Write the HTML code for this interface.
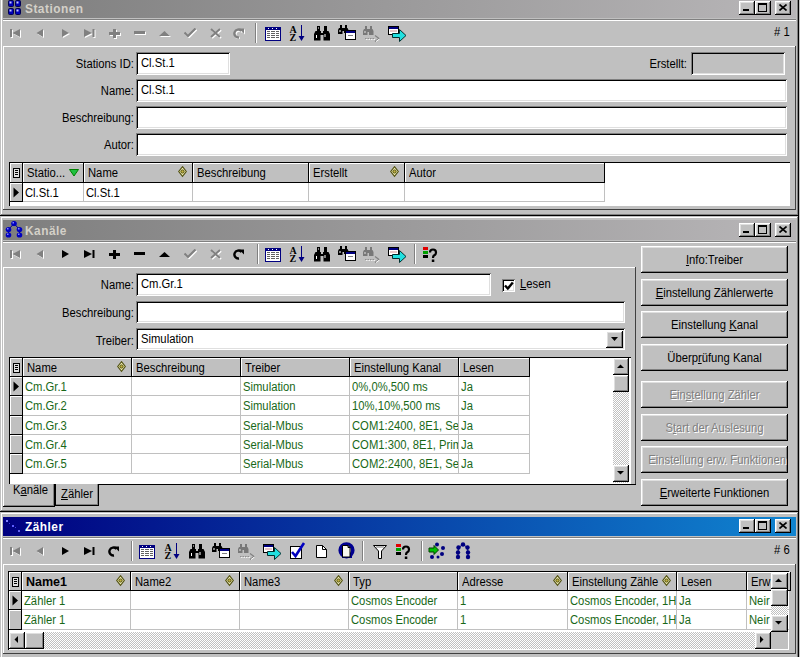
<!DOCTYPE html>
<html><head><meta charset="utf-8"><style>
html,body{margin:0;padding:0;width:800px;height:657px;overflow:hidden;background:#c0c0c0;}
body{position:relative;font-family:"Liberation Sans",sans-serif;color:#000;}
div,span,svg{position:absolute;box-sizing:border-box;}
span{white-space:nowrap;line-height:1;font-size:12.5px;transform:scaleX(0.9);transform-origin:left top;}
</style></head><body>
<div style="left:0;top:-4px;width:799px;height:220px;background:#c0c0c0;box-shadow:inset -1px -1px #000,inset 1px 1px #c0c0c0,inset -2px -2px #808080,inset 2px 2px #fff;"></div>
<div style="left:3px;top:-1px;width:793px;height:19px;background:linear-gradient(to right,#7e7e7e,#b8b6b8);"></div>
<svg style="left:5px;top:0px" width="17" height="17" viewBox="0 0 17 17"><rect x="3.5" y="0.5" width="5" height="6" rx="1" fill="#0000b8" stroke="#000050"/><rect x="4.5" y="1.5" width="2" height="2" fill="#c8c8ff"/><rect x="10.5" y="0.5" width="5" height="6" rx="1" fill="#0000b8" stroke="#000050"/><rect x="11.5" y="1.5" width="2" height="2" fill="#c8c8ff"/><rect x="3.5" y="8.5" width="5" height="6" rx="1" fill="#0000b8" stroke="#000050"/><rect x="4.5" y="9.5" width="2" height="2" fill="#c8c8ff"/><rect x="10.5" y="8.5" width="5" height="6" rx="1" fill="#0000b8" stroke="#000050"/><rect x="11.5" y="9.5" width="2" height="2" fill="#c8c8ff"/></svg>
<span style="left:25px;top:1.5px;font-weight:bold;font-size:13.5px;letter-spacing:0.55px;color:#d4d0c8;transform:scaleX(0.88);">Stationen</span>
<div style="left:739px;top:1px;width:16px;height:14px;background:#c0c0c0;box-shadow:inset -1px -1px #000,inset 1px 1px #fff,inset -2px -2px #808080,inset 2px 2px #dfdfdf;"></div>
<div style="left:743px;top:9px;width:6px;height:2px;background:#000;"></div>
<div style="left:755px;top:1px;width:16px;height:14px;background:#c0c0c0;box-shadow:inset -1px -1px #000,inset 1px 1px #fff,inset -2px -2px #808080,inset 2px 2px #dfdfdf;"></div>
<div style="left:758px;top:3px;width:9px;height:9px;box-shadow:inset 0 2px #000,inset 1px 0 #000,inset -1px 0 #000,inset 0 -1px #000;"></div>
<div style="left:775px;top:1px;width:16px;height:14px;background:#c0c0c0;box-shadow:inset -1px -1px #000,inset 1px 1px #fff,inset -2px -2px #808080,inset 2px 2px #dfdfdf;"></div>
<svg style="left:779px;top:4px" width="8" height="7"><path d="M0.5 0.5L7.5 6.5M7.5 0.5L0.5 6.5" stroke="#000" stroke-width="1.6"/></svg>
<div style="left:3px;top:19px;width:793px;height:1px;background:#808080;"></div>
<div style="left:3px;top:20px;width:793px;height:1px;background:#fff;"></div>
<svg style="left:10px;top:29px" width="12" height="10" viewBox="0 0 12 10"><g transform="translate(1,1)"><rect x="0" y="0" width="2" height="8" fill="#fff"/><path d="M10 0V8L2.5 4Z" fill="#fff"/></g><rect x="0" y="0" width="2" height="8" fill="#808080"/><path d="M10 0V8L2.5 4Z" fill="#808080"/></svg>
<svg style="left:36px;top:29px" width="9" height="10" viewBox="0 0 9 10"><g transform="translate(1,1)"><path d="M7 0V8L0.5 4Z" fill="#fff"/></g><path d="M7 0V8L0.5 4Z" fill="#808080"/></svg>
<svg style="left:62px;top:29px" width="9" height="10" viewBox="0 0 9 10"><g transform="translate(1,1)"><path d="M0 0V8L7 4Z" fill="#fff"/></g><path d="M0 0V8L7 4Z" fill="#808080"/></svg>
<svg style="left:84px;top:29px" width="12" height="10" viewBox="0 0 12 10"><g transform="translate(1,1)"><path d="M0 0V8L8 4Z" fill="#fff"/><rect x="8.5" y="0" width="2" height="8" fill="#fff"/></g><path d="M0 0V8L8 4Z" fill="#808080"/><rect x="8.5" y="0" width="2" height="8" fill="#808080"/></svg>
<svg style="left:109px;top:29px" width="12" height="10" viewBox="0 0 12 10"><g transform="translate(1,1)"><rect x="4" y="0" width="3" height="9" fill="#fff"/><rect x="0" y="3" width="11" height="3" fill="#fff"/></g><rect x="4" y="0" width="3" height="9" fill="#808080"/><rect x="0" y="3" width="11" height="3" fill="#808080"/></svg>
<svg style="left:134px;top:31px" width="12" height="4" viewBox="0 0 12 4"><g transform="translate(1,1)"><rect x="0" y="0" width="11" height="3" fill="#fff"/></g><rect x="0" y="0" width="11" height="3" fill="#808080"/></svg>
<svg style="left:159px;top:31px" width="12" height="6" viewBox="0 0 12 6"><g transform="translate(1,1)"><path d="M0 5H11L5.5 0Z" fill="#fff"/></g><path d="M0 5H11L5.5 0Z" fill="#808080"/></svg>
<svg style="left:184px;top:28px" width="13" height="10" viewBox="0 0 13 10"><g transform="translate(1,1)"><path d="M0.5 4.5L4 8L11.5 0.5" stroke="#fff" stroke-width="2.2" fill="none"/></g><path d="M0.5 4.5L4 8L11.5 0.5" stroke="#808080" stroke-width="2.2" fill="none"/></svg>
<svg style="left:210px;top:28px" width="12" height="11" viewBox="0 0 12 11"><g transform="translate(1,1)"><path d="M1 1L10 9M10 1L1 9" stroke="#fff" stroke-width="2" fill="none"/></g><path d="M1 1L10 9M10 1L1 9" stroke="#808080" stroke-width="2" fill="none"/></svg>
<svg style="left:233px;top:28px" width="12" height="11" viewBox="0 0 12 11"><g transform="translate(1,1)"><path d="M8.5 3A4 4 0 1 0 6 9.5" stroke="#fff" stroke-width="2.4" fill="none"/><path d="M6 0.5L11 0.5L11 5.5Z" fill="#fff"/></g><path d="M8.5 3A4 4 0 1 0 6 9.5" stroke="#808080" stroke-width="2.4" fill="none"/><path d="M6 0.5L11 0.5L11 5.5Z" fill="#808080"/></svg>
<div style="left:255px;top:23px;width:1px;height:20px;background:#808080;box-shadow:1px 0 #fff"></div>
<svg style="left:265px;top:27px" width="16" height="14" viewBox="0 0 16 14"><rect x="0.5" y="0.5" width="15" height="13" fill="#fff" stroke="#000080"/><rect x="0" y="0" width="16" height="3" fill="#000080"/><rect x="3" y="1" width="1" height="1" fill="#fff"/><rect x="7" y="1" width="1" height="1" fill="#fff"/><rect x="11" y="1" width="1" height="1" fill="#fff"/><rect x="2" y="4" width="3" height="1" fill="#606060"/><rect x="6" y="4" width="4" height="1" fill="#606060"/><rect x="11" y="4" width="3" height="1" fill="#606060"/><rect x="2" y="6" width="3" height="1" fill="#606060"/><rect x="6" y="6" width="4" height="1" fill="#606060"/><rect x="11" y="6" width="3" height="1" fill="#606060"/><rect x="2" y="8" width="3" height="1" fill="#606060"/><rect x="6" y="8" width="4" height="1" fill="#606060"/><rect x="11" y="8" width="3" height="1" fill="#606060"/><rect x="2" y="10" width="3" height="1" fill="#606060"/><rect x="6" y="10" width="4" height="1" fill="#606060"/><rect x="11" y="10" width="3" height="1" fill="#606060"/></svg>
<svg style="left:289px;top:25px" width="17" height="17" viewBox="0 0 17 17"><text x="0.5" y="8" font-family="Liberation Serif" font-weight="bold" font-size="10" fill="#000">A</text><text x="0.5" y="16" font-family="Liberation Serif" font-weight="bold" font-size="10" fill="#000">Z</text><rect x="12" y="0" width="1" height="13" fill="#000080"/><path d="M9.5 11H15.5L12.5 16Z" fill="#000080"/></svg>
<svg style="left:314px;top:26px" width="16" height="16" viewBox="0 0 16 16"><rect x="3" y="0" width="3" height="5" fill="#000"/><rect x="10" y="0" width="3" height="5" fill="#000"/><path d="M1.5 5H7V7H9V5H14.5L16 8V14.5H9.5V9H6.5V14.5H0V8Z" fill="#000"/><rect x="2" y="9" width="1" height="3" fill="#fff"/><rect x="10.5" y="8" width="1" height="3" fill="#fff"/><rect x="4" y="1" width="1" height="2" fill="#808080"/></svg>
<svg style="left:338px;top:25px" width="19" height="16" viewBox="0 0 19 16"><rect x="2" y="0" width="2" height="3" fill="#000"/><rect x="7" y="0" width="2" height="3" fill="#000"/><path d="M1 3H9.5L10.5 5V8H6V6H4.5V9H0V5Z" fill="#000"/><rect x="1.5" y="5" width="1" height="2" fill="#fff"/><rect x="7.5" y="5.5" width="10" height="9" fill="#fff" stroke="#000"/><rect x="8" y="6" width="9" height="2" fill="#000080"/><rect x="10" y="10" width="5" height="1" fill="#808080"/></svg>
<svg style="left:363px;top:26px" width="18" height="17" viewBox="0 0 18 17"><rect x="2" y="0" width="2" height="3" fill="#787878"/><rect x="7" y="0" width="2" height="3" fill="#787878"/><path d="M1 3H9.5L10.5 5V9H6V6H4.5V9H0V5Z" fill="#787878"/><rect x="1.5" y="5" width="1" height="2" fill="#e0e0e0"/><path d="M2 12.5H12" stroke="#909090" stroke-dasharray="1.5 1"/><path d="M12 9.5L16 12.5L12 15.5" stroke="#808080" stroke-width="1.2" fill="none"/><path d="M3 13.5H12" stroke="#fff" stroke-width="0.8" stroke-dasharray="1.5 1"/><path d="M13 15.5L16.5 13" stroke="#fff" stroke-width="1"/></svg>
<svg style="left:388px;top:26px" width="19" height="17" viewBox="0 0 19 17"><rect x="0.5" y="0.5" width="10" height="8" fill="#fff" stroke="#000"/><rect x="1" y="1" width="9" height="2" fill="#000080"/><rect x="2" y="4.5" width="7" height="1" fill="#d09090"/><path d="M4.5 7.5H11.5V3.5L18 9.5L11.5 15.5V11.5H4.5Z" fill="#20e0e0" stroke="#003030" stroke-width="1"/></svg>
<span style="left:774px;top:26px;"># 1</span>
<div style="left:3px;top:46px;width:793px;height:164px;box-shadow:inset -1px -1px #404040,inset 1px 1px #fff;"></div>
<span style="left:0;width:134px;text-align:right;top:58px;transform-origin:right top;">Stations ID:</span>
<div style="left:136px;top:52px;width:94px;height:23px;background:#fff;box-shadow:inset 1px 1px #808080,inset -1px -1px #fff,inset 2px 2px #000,inset -2px -2px #dfdfdf;"></div>
<span style="left:141px;top:57px;">Cl.St.1</span>
<span style="left:0;width:687px;text-align:right;top:58px;transform-origin:right top;">Erstellt:</span>
<div style="left:691px;top:52px;width:94px;height:23px;background:#c0c0c0;box-shadow:inset 1px 1px #808080,inset -1px -1px #fff,inset 2px 2px #000,inset -2px -2px #dfdfdf;"></div>
<span style="left:0;width:134px;text-align:right;top:85px;transform-origin:right top;">Name:</span>
<div style="left:136px;top:79px;width:651px;height:23px;background:#fff;box-shadow:inset 1px 1px #808080,inset -1px -1px #fff,inset 2px 2px #000,inset -2px -2px #dfdfdf;"></div>
<span style="left:141px;top:84px;">Cl.St.1</span>
<span style="left:0;width:134px;text-align:right;top:112px;transform-origin:right top;">Beschreibung:</span>
<div style="left:136px;top:106px;width:651px;height:23px;background:#fff;box-shadow:inset 1px 1px #808080,inset -1px -1px #fff,inset 2px 2px #000,inset -2px -2px #dfdfdf;"></div>
<span style="left:0;width:134px;text-align:right;top:139px;transform-origin:right top;">Autor:</span>
<div style="left:136px;top:133px;width:651px;height:23px;background:#fff;box-shadow:inset 1px 1px #808080,inset -1px -1px #fff,inset 2px 2px #000,inset -2px -2px #dfdfdf;"></div>
<div style="left:9px;top:162px;width:781px;height:44px;background:#fff;box-shadow:inset 1px 1px #000,inset -1px -1px #fff;"></div>
<div style="left:10px;top:163px;width:13px;height:20px;background:#c0c0c0;box-shadow:inset -1px -1px #000,inset 1px 1px #fff;"></div>
<svg style="left:13px;top:168px" width="7" height="10" viewBox="0 0 7 10"><rect x="0.5" y="0.5" width="6" height="9" fill="#e0e0e0" stroke="#000"/><rect x="2" y="2" width="3" height="1" fill="#000"/><rect x="2" y="4" width="3" height="1" fill="#000"/><rect x="2" y="6" width="3" height="1" fill="#000"/></svg>
<div style="left:23px;top:163px;width:61px;height:20px;background:#c0c0c0;box-shadow:inset -1px -1px #000,inset 1px 1px #fff;"></div>
<span style="left:27px;top:167px;width:60.0px;overflow:hidden;">Statio...</span>
<svg style="left:69px;top:169px" width="10" height="8" viewBox="0 0 10 8"><path d="M0.5 0.5H9.5L5 7Z" fill="#20c040" stroke="#008000"/></svg>
<div style="left:84px;top:163px;width:109px;height:20px;background:#c0c0c0;box-shadow:inset -1px -1px #000,inset 1px 1px #fff;"></div>
<span style="left:88px;top:167px;width:113.3px;overflow:hidden;">Name</span>
<svg style="left:178px;top:166px" width="9" height="12" viewBox="0 0 9 12"><path d="M4.5 0.7L8.3 5.5L4.5 10.3L0.7 5.5Z" fill="#f4f0b8" stroke="#505010" stroke-width="1.1"/><circle cx="4.5" cy="5.5" r="1.6" fill="#c0b040" stroke="#505010" stroke-width="1"/></svg>
<div style="left:193px;top:163px;width:116px;height:20px;background:#c0c0c0;box-shadow:inset -1px -1px #000,inset 1px 1px #fff;"></div>
<span style="left:197px;top:167px;width:121.1px;overflow:hidden;">Beschreibung</span>
<div style="left:309px;top:163px;width:96px;height:20px;background:#c0c0c0;box-shadow:inset -1px -1px #000,inset 1px 1px #fff;"></div>
<span style="left:313px;top:167px;width:98.9px;overflow:hidden;">Erstellt</span>
<svg style="left:390px;top:166px" width="9" height="12" viewBox="0 0 9 12"><path d="M4.5 0.7L8.3 5.5L4.5 10.3L0.7 5.5Z" fill="#f4f0b8" stroke="#505010" stroke-width="1.1"/><circle cx="4.5" cy="5.5" r="1.6" fill="#c0b040" stroke="#505010" stroke-width="1"/></svg>
<div style="left:405px;top:163px;width:200px;height:20px;background:#c0c0c0;box-shadow:inset -1px -1px #000,inset 1px 1px #fff;"></div>
<span style="left:409px;top:167px;width:214.4px;overflow:hidden;">Autor</span>
<div style="left:10px;top:183px;width:13px;height:19px;background:#c0c0c0;box-shadow:inset -1px -1px #000,inset 1px 1px #fff;"></div>
<svg style="left:13px;top:187px" width="7" height="11" viewBox="0 0 7 11"><path d="M0.5 0.5V10.5L6 5.5Z" fill="#000"/></svg>
<div style="left:23px;top:183px;width:61px;height:19px;box-shadow:inset -1px -1px #c0c0c0;"></div>
<span style="left:25px;top:187px;color:#000;width:64.4px;overflow:hidden;">Cl.St.1</span>
<div style="left:84px;top:183px;width:109px;height:19px;box-shadow:inset -1px -1px #c0c0c0;"></div>
<span style="left:86px;top:187px;color:#000;width:117.8px;overflow:hidden;">Cl.St.1</span>
<div style="left:193px;top:183px;width:116px;height:19px;box-shadow:inset -1px -1px #c0c0c0;"></div>
<div style="left:309px;top:183px;width:96px;height:19px;box-shadow:inset -1px -1px #c0c0c0;"></div>
<div style="left:405px;top:183px;width:200px;height:19px;box-shadow:inset -1px -1px #c0c0c0;"></div>
<div style="left:0;top:216px;width:799px;height:296px;background:#c0c0c0;box-shadow:inset -1px -1px #000,inset 1px 1px #c0c0c0,inset -2px -2px #808080,inset 2px 2px #fff;"></div>
<div style="left:3px;top:220px;width:793px;height:20px;background:linear-gradient(to right,#7e7e7e,#b8b6b8);"></div>
<svg style="left:0px;top:220px" width="24" height="19" viewBox="0 0 24 19"><path d="M8.5 14.5V9.5L14 3.5L19.5 9.5V14.5" stroke="#000080" stroke-width="1" fill="none"/><ellipse cx="14" cy="3.5" rx="2.8" ry="2.6" fill="#0000c0"/><rect x="12.5" y="2.0" width="1.5" height="1.5" fill="#8080ff"/><ellipse cx="8.5" cy="9.5" rx="2.8" ry="2.6" fill="#0000c0"/><rect x="7.0" y="8.0" width="1.5" height="1.5" fill="#8080ff"/><ellipse cx="19.5" cy="9.5" rx="2.8" ry="2.6" fill="#0000c0"/><rect x="18.0" y="8.0" width="1.5" height="1.5" fill="#8080ff"/><ellipse cx="8.5" cy="15" rx="2.8" ry="2.6" fill="#0000c0"/><rect x="7.0" y="13.5" width="1.5" height="1.5" fill="#8080ff"/><ellipse cx="19.5" cy="15" rx="2.8" ry="2.6" fill="#0000c0"/><rect x="18.0" y="13.5" width="1.5" height="1.5" fill="#8080ff"/></svg>
<span style="left:25px;top:223.5px;font-weight:bold;font-size:13.5px;letter-spacing:0.55px;color:#d4d0c8;transform:scaleX(0.88);">Kanäle</span>
<div style="left:739px;top:223px;width:16px;height:14px;background:#c0c0c0;box-shadow:inset -1px -1px #000,inset 1px 1px #fff,inset -2px -2px #808080,inset 2px 2px #dfdfdf;"></div>
<div style="left:743px;top:231px;width:6px;height:2px;background:#000;"></div>
<div style="left:755px;top:223px;width:16px;height:14px;background:#c0c0c0;box-shadow:inset -1px -1px #000,inset 1px 1px #fff,inset -2px -2px #808080,inset 2px 2px #dfdfdf;"></div>
<div style="left:758px;top:225px;width:9px;height:9px;box-shadow:inset 0 2px #000,inset 1px 0 #000,inset -1px 0 #000,inset 0 -1px #000;"></div>
<div style="left:775px;top:223px;width:16px;height:14px;background:#c0c0c0;box-shadow:inset -1px -1px #000,inset 1px 1px #fff,inset -2px -2px #808080,inset 2px 2px #dfdfdf;"></div>
<svg style="left:779px;top:226px" width="8" height="7"><path d="M0.5 0.5L7.5 6.5M7.5 0.5L0.5 6.5" stroke="#000" stroke-width="1.6"/></svg>
<div style="left:3px;top:241px;width:793px;height:1px;background:#808080;"></div>
<div style="left:3px;top:242px;width:793px;height:1px;background:#fff;"></div>
<svg style="left:10px;top:250px" width="12" height="10" viewBox="0 0 12 10"><g transform="translate(1,1)"><rect x="0" y="0" width="2" height="8" fill="#fff"/><path d="M10 0V8L2.5 4Z" fill="#fff"/></g><rect x="0" y="0" width="2" height="8" fill="#808080"/><path d="M10 0V8L2.5 4Z" fill="#808080"/></svg>
<svg style="left:36px;top:250px" width="9" height="10" viewBox="0 0 9 10"><g transform="translate(1,1)"><path d="M7 0V8L0.5 4Z" fill="#fff"/></g><path d="M7 0V8L0.5 4Z" fill="#808080"/></svg>
<svg style="left:62px;top:250px" width="9" height="10" viewBox="0 0 9 10"><path d="M0 0V8L7 4Z" fill="#000"/></svg>
<svg style="left:84px;top:250px" width="12" height="10" viewBox="0 0 12 10"><path d="M0 0V8L8 4Z" fill="#000"/><rect x="8.5" y="0" width="2" height="8" fill="#000"/></svg>
<svg style="left:109px;top:250px" width="12" height="10" viewBox="0 0 12 10"><rect x="4" y="0" width="3" height="9" fill="#000"/><rect x="0" y="3" width="11" height="3" fill="#000"/></svg>
<svg style="left:134px;top:252px" width="12" height="4" viewBox="0 0 12 4"><rect x="0" y="0" width="11" height="3" fill="#000"/></svg>
<svg style="left:159px;top:252px" width="12" height="6" viewBox="0 0 12 6"><path d="M0 5H11L5.5 0Z" fill="#000"/></svg>
<svg style="left:184px;top:249px" width="13" height="10" viewBox="0 0 13 10"><g transform="translate(1,1)"><path d="M0.5 4.5L4 8L11.5 0.5" stroke="#fff" stroke-width="2.2" fill="none"/></g><path d="M0.5 4.5L4 8L11.5 0.5" stroke="#808080" stroke-width="2.2" fill="none"/></svg>
<svg style="left:210px;top:249px" width="12" height="11" viewBox="0 0 12 11"><g transform="translate(1,1)"><path d="M1 1L10 9M10 1L1 9" stroke="#fff" stroke-width="2" fill="none"/></g><path d="M1 1L10 9M10 1L1 9" stroke="#808080" stroke-width="2" fill="none"/></svg>
<svg style="left:233px;top:249px" width="12" height="11" viewBox="0 0 12 11"><path d="M8.5 3A4 4 0 1 0 6 9.5" stroke="#000" stroke-width="2.4" fill="none"/><path d="M6 0.5L11 0.5L11 5.5Z" fill="#000"/></svg>
<div style="left:257px;top:244px;width:1px;height:20px;background:#808080;box-shadow:1px 0 #fff"></div>
<svg style="left:265px;top:248px" width="16" height="14" viewBox="0 0 16 14"><rect x="0.5" y="0.5" width="15" height="13" fill="#fff" stroke="#000080"/><rect x="0" y="0" width="16" height="3" fill="#000080"/><rect x="3" y="1" width="1" height="1" fill="#fff"/><rect x="7" y="1" width="1" height="1" fill="#fff"/><rect x="11" y="1" width="1" height="1" fill="#fff"/><rect x="2" y="4" width="3" height="1" fill="#606060"/><rect x="6" y="4" width="4" height="1" fill="#606060"/><rect x="11" y="4" width="3" height="1" fill="#606060"/><rect x="2" y="6" width="3" height="1" fill="#606060"/><rect x="6" y="6" width="4" height="1" fill="#606060"/><rect x="11" y="6" width="3" height="1" fill="#606060"/><rect x="2" y="8" width="3" height="1" fill="#606060"/><rect x="6" y="8" width="4" height="1" fill="#606060"/><rect x="11" y="8" width="3" height="1" fill="#606060"/><rect x="2" y="10" width="3" height="1" fill="#606060"/><rect x="6" y="10" width="4" height="1" fill="#606060"/><rect x="11" y="10" width="3" height="1" fill="#606060"/></svg>
<svg style="left:289px;top:246px" width="17" height="17" viewBox="0 0 17 17"><text x="0.5" y="8" font-family="Liberation Serif" font-weight="bold" font-size="10" fill="#000">A</text><text x="0.5" y="16" font-family="Liberation Serif" font-weight="bold" font-size="10" fill="#000">Z</text><rect x="12" y="0" width="1" height="13" fill="#000080"/><path d="M9.5 11H15.5L12.5 16Z" fill="#000080"/></svg>
<svg style="left:314px;top:247px" width="16" height="16" viewBox="0 0 16 16"><rect x="3" y="0" width="3" height="5" fill="#000"/><rect x="10" y="0" width="3" height="5" fill="#000"/><path d="M1.5 5H7V7H9V5H14.5L16 8V14.5H9.5V9H6.5V14.5H0V8Z" fill="#000"/><rect x="2" y="9" width="1" height="3" fill="#fff"/><rect x="10.5" y="8" width="1" height="3" fill="#fff"/><rect x="4" y="1" width="1" height="2" fill="#808080"/></svg>
<svg style="left:338px;top:246px" width="19" height="16" viewBox="0 0 19 16"><rect x="2" y="0" width="2" height="3" fill="#000"/><rect x="7" y="0" width="2" height="3" fill="#000"/><path d="M1 3H9.5L10.5 5V8H6V6H4.5V9H0V5Z" fill="#000"/><rect x="1.5" y="5" width="1" height="2" fill="#fff"/><rect x="7.5" y="5.5" width="10" height="9" fill="#fff" stroke="#000"/><rect x="8" y="6" width="9" height="2" fill="#000080"/><rect x="10" y="10" width="5" height="1" fill="#808080"/></svg>
<svg style="left:363px;top:247px" width="18" height="17" viewBox="0 0 18 17"><rect x="2" y="0" width="2" height="3" fill="#787878"/><rect x="7" y="0" width="2" height="3" fill="#787878"/><path d="M1 3H9.5L10.5 5V9H6V6H4.5V9H0V5Z" fill="#787878"/><rect x="1.5" y="5" width="1" height="2" fill="#e0e0e0"/><path d="M2 12.5H12" stroke="#909090" stroke-dasharray="1.5 1"/><path d="M12 9.5L16 12.5L12 15.5" stroke="#808080" stroke-width="1.2" fill="none"/><path d="M3 13.5H12" stroke="#fff" stroke-width="0.8" stroke-dasharray="1.5 1"/><path d="M13 15.5L16.5 13" stroke="#fff" stroke-width="1"/></svg>
<svg style="left:388px;top:247px" width="19" height="17" viewBox="0 0 19 17"><rect x="0.5" y="0.5" width="10" height="8" fill="#fff" stroke="#000"/><rect x="1" y="1" width="9" height="2" fill="#000080"/><rect x="2" y="4.5" width="7" height="1" fill="#d09090"/><path d="M4.5 7.5H11.5V3.5L18 9.5L11.5 15.5V11.5H4.5Z" fill="#20e0e0" stroke="#003030" stroke-width="1"/></svg>
<div style="left:414px;top:244px;width:1px;height:20px;background:#808080;box-shadow:1px 0 #fff"></div>
<svg style="left:423px;top:247px" width="16" height="16" viewBox="0 0 16 16"><rect x="0" y="0" width="5" height="3" fill="#e00000"/><rect x="0" y="4" width="5" height="3" fill="#00a000"/><rect x="0" y="8" width="5" height="3" fill="#000"/><path d="M7 5.5Q7 2.5 10 2.5Q13 2.5 13 5.5Q13 7.5 11 8.5Q10 9.2 10 11" stroke="#000" stroke-width="2.2" fill="none"/><rect x="8.8" y="12.5" width="2.5" height="2.5" fill="#000"/></svg>
<div style="left:3px;top:267px;width:633px;height:218px;box-shadow:inset -1px -1px #404040,inset 1px 1px #fff;"></div>
<span style="left:0;width:134px;text-align:right;top:279px;transform-origin:right top;">Name:</span>
<div style="left:136px;top:273px;width:355px;height:23px;background:#fff;box-shadow:inset 1px 1px #808080,inset -1px -1px #fff,inset 2px 2px #000,inset -2px -2px #dfdfdf;"></div>
<span style="left:141px;top:278px;">Cm.Gr.1</span>
<div style="left:502px;top:279px;width:13px;height:13px;background:#fff;box-shadow:inset 1px 1px #808080,inset -1px -1px #fff,inset 2px 2px #000,inset -2px -2px #dfdfdf;"></div>
<svg style="left:504px;top:281px" width="10" height="10" viewBox="0 0 10 10"><path d="M1 4.5L3.8 7.5L8.8 1.5" stroke="#000" stroke-width="2.4" fill="none"/></svg>
<span style="left:520px;top:278px;"><u>L</u>esen</span>
<span style="left:0;width:134px;text-align:right;top:307px;transform-origin:right top;">Beschreibung:</span>
<div style="left:136px;top:301px;width:489px;height:22px;background:#fff;box-shadow:inset 1px 1px #808080,inset -1px -1px #fff,inset 2px 2px #000,inset -2px -2px #dfdfdf;"></div>
<span style="left:0;width:134px;text-align:right;top:335px;transform-origin:right top;">Treiber:</span>
<div style="left:136px;top:328px;width:489px;height:22px;background:#fff;box-shadow:inset 1px 1px #808080,inset -1px -1px #fff,inset 2px 2px #000,inset -2px -2px #dfdfdf;"></div>
<span style="left:141px;top:333px;">Simulation</span>
<div style="left:606px;top:331px;width:17px;height:17px;background:#c0c0c0;box-shadow:inset -1px -1px #000,inset 1px 1px #fff,inset -2px -2px #808080,inset 2px 2px #dfdfdf;"></div>
<svg style="left:611px;top:337px" width="7" height="4" viewBox="0 0 7 4"><path d="M0 0H7L3.5 4Z" fill="#000"/></svg>
<div style="left:9px;top:357px;width:622px;height:128px;background:#fff;box-shadow:inset 1px 1px #000,inset -1px -1px #fff;"></div>
<div style="left:10px;top:358px;width:13px;height:19px;background:#c0c0c0;box-shadow:inset -1px -1px #000,inset 1px 1px #fff;"></div>
<svg style="left:13px;top:363px" width="7" height="10" viewBox="0 0 7 10"><rect x="0.5" y="0.5" width="6" height="9" fill="#e0e0e0" stroke="#000"/><rect x="2" y="2" width="3" height="1" fill="#000"/><rect x="2" y="4" width="3" height="1" fill="#000"/><rect x="2" y="6" width="3" height="1" fill="#000"/></svg>
<div style="left:23px;top:358px;width:109px;height:19px;background:#c0c0c0;box-shadow:inset -1px -1px #000,inset 1px 1px #fff;"></div>
<span style="left:27px;top:362px;width:113.3px;overflow:hidden;">Name</span>
<svg style="left:117px;top:361px" width="9" height="12" viewBox="0 0 9 12"><path d="M4.5 0.7L8.3 5.5L4.5 10.3L0.7 5.5Z" fill="#f4f0b8" stroke="#505010" stroke-width="1.1"/><circle cx="4.5" cy="5.5" r="1.6" fill="#c0b040" stroke="#505010" stroke-width="1"/></svg>
<div style="left:132px;top:358px;width:109px;height:19px;background:#c0c0c0;box-shadow:inset -1px -1px #000,inset 1px 1px #fff;"></div>
<span style="left:136px;top:362px;width:113.3px;overflow:hidden;">Beschreibung</span>
<div style="left:241px;top:358px;width:109px;height:19px;background:#c0c0c0;box-shadow:inset -1px -1px #000,inset 1px 1px #fff;"></div>
<span style="left:245px;top:362px;width:113.3px;overflow:hidden;">Treiber</span>
<div style="left:350px;top:358px;width:109px;height:19px;background:#c0c0c0;box-shadow:inset -1px -1px #000,inset 1px 1px #fff;"></div>
<span style="left:354px;top:362px;width:113.3px;overflow:hidden;">Einstellung Kanal</span>
<div style="left:459px;top:358px;width:71px;height:19px;background:#c0c0c0;box-shadow:inset -1px -1px #000,inset 1px 1px #fff;"></div>
<span style="left:463px;top:362px;width:71.1px;overflow:hidden;">Lesen</span>
<div style="left:10px;top:377px;width:13px;height:19px;background:#c0c0c0;box-shadow:inset -1px -1px #000,inset 1px 1px #fff;"></div>
<svg style="left:13px;top:381px" width="7" height="11" viewBox="0 0 7 11"><path d="M0.5 0.5V10.5L6 5.5Z" fill="#000"/></svg>
<div style="left:23px;top:377px;width:109px;height:19px;box-shadow:inset -1px -1px #c0c0c0;"></div>
<span style="left:25px;top:381px;color:#186818;width:117.8px;overflow:hidden;">Cm.Gr.1</span>
<div style="left:132px;top:377px;width:109px;height:19px;box-shadow:inset -1px -1px #c0c0c0;"></div>
<div style="left:241px;top:377px;width:109px;height:19px;box-shadow:inset -1px -1px #c0c0c0;"></div>
<span style="left:243px;top:381px;color:#186818;width:117.8px;overflow:hidden;">Simulation</span>
<div style="left:350px;top:377px;width:109px;height:19px;box-shadow:inset -1px -1px #c0c0c0;"></div>
<span style="left:352px;top:381px;color:#186818;width:117.8px;overflow:hidden;">0%,0%,500 ms</span>
<div style="left:459px;top:377px;width:71px;height:19px;box-shadow:inset -1px -1px #c0c0c0;"></div>
<span style="left:461px;top:381px;color:#186818;width:75.6px;overflow:hidden;">Ja</span>
<div style="left:10px;top:396px;width:13px;height:20px;background:#c0c0c0;box-shadow:inset -1px -1px #000,inset 1px 1px #fff;"></div>
<div style="left:23px;top:396px;width:109px;height:20px;box-shadow:inset -1px -1px #c0c0c0;"></div>
<span style="left:25px;top:400px;color:#186818;width:117.8px;overflow:hidden;">Cm.Gr.2</span>
<div style="left:132px;top:396px;width:109px;height:20px;box-shadow:inset -1px -1px #c0c0c0;"></div>
<div style="left:241px;top:396px;width:109px;height:20px;box-shadow:inset -1px -1px #c0c0c0;"></div>
<span style="left:243px;top:400px;color:#186818;width:117.8px;overflow:hidden;">Simulation</span>
<div style="left:350px;top:396px;width:109px;height:20px;box-shadow:inset -1px -1px #c0c0c0;"></div>
<span style="left:352px;top:400px;color:#186818;width:117.8px;overflow:hidden;">10%,10%,500 ms</span>
<div style="left:459px;top:396px;width:71px;height:20px;box-shadow:inset -1px -1px #c0c0c0;"></div>
<span style="left:461px;top:400px;color:#186818;width:75.6px;overflow:hidden;">Ja</span>
<div style="left:10px;top:416px;width:13px;height:19px;background:#c0c0c0;box-shadow:inset -1px -1px #000,inset 1px 1px #fff;"></div>
<div style="left:23px;top:416px;width:109px;height:19px;box-shadow:inset -1px -1px #c0c0c0;"></div>
<span style="left:25px;top:420px;color:#186818;width:117.8px;overflow:hidden;">Cm.Gr.3</span>
<div style="left:132px;top:416px;width:109px;height:19px;box-shadow:inset -1px -1px #c0c0c0;"></div>
<div style="left:241px;top:416px;width:109px;height:19px;box-shadow:inset -1px -1px #c0c0c0;"></div>
<span style="left:243px;top:420px;color:#186818;width:117.8px;overflow:hidden;">Serial-Mbus</span>
<div style="left:350px;top:416px;width:109px;height:19px;box-shadow:inset -1px -1px #c0c0c0;"></div>
<span style="left:352px;top:420px;color:#186818;width:117.8px;overflow:hidden;">COM1:2400, 8E1, Se</span>
<div style="left:459px;top:416px;width:71px;height:19px;box-shadow:inset -1px -1px #c0c0c0;"></div>
<span style="left:461px;top:420px;color:#186818;width:75.6px;overflow:hidden;">Ja</span>
<div style="left:10px;top:435px;width:13px;height:19px;background:#c0c0c0;box-shadow:inset -1px -1px #000,inset 1px 1px #fff;"></div>
<div style="left:23px;top:435px;width:109px;height:19px;box-shadow:inset -1px -1px #c0c0c0;"></div>
<span style="left:25px;top:439px;color:#186818;width:117.8px;overflow:hidden;">Cm.Gr.4</span>
<div style="left:132px;top:435px;width:109px;height:19px;box-shadow:inset -1px -1px #c0c0c0;"></div>
<div style="left:241px;top:435px;width:109px;height:19px;box-shadow:inset -1px -1px #c0c0c0;"></div>
<span style="left:243px;top:439px;color:#186818;width:117.8px;overflow:hidden;">Serial-Mbus</span>
<div style="left:350px;top:435px;width:109px;height:19px;box-shadow:inset -1px -1px #c0c0c0;"></div>
<span style="left:352px;top:439px;color:#186818;width:117.8px;overflow:hidden;">COM1:300, 8E1, Prim</span>
<div style="left:459px;top:435px;width:71px;height:19px;box-shadow:inset -1px -1px #c0c0c0;"></div>
<span style="left:461px;top:439px;color:#186818;width:75.6px;overflow:hidden;">Ja</span>
<div style="left:10px;top:454px;width:13px;height:20px;background:#c0c0c0;box-shadow:inset -1px -1px #000,inset 1px 1px #fff;"></div>
<div style="left:23px;top:454px;width:109px;height:20px;box-shadow:inset -1px -1px #c0c0c0;"></div>
<span style="left:25px;top:458px;color:#186818;width:117.8px;overflow:hidden;">Cm.Gr.5</span>
<div style="left:132px;top:454px;width:109px;height:20px;box-shadow:inset -1px -1px #c0c0c0;"></div>
<div style="left:241px;top:454px;width:109px;height:20px;box-shadow:inset -1px -1px #c0c0c0;"></div>
<span style="left:243px;top:458px;color:#186818;width:117.8px;overflow:hidden;">Serial-Mbus</span>
<div style="left:350px;top:454px;width:109px;height:20px;box-shadow:inset -1px -1px #c0c0c0;"></div>
<span style="left:352px;top:458px;color:#186818;width:117.8px;overflow:hidden;">COM2:2400, 8E1, Se</span>
<div style="left:459px;top:454px;width:71px;height:20px;box-shadow:inset -1px -1px #c0c0c0;"></div>
<span style="left:461px;top:458px;color:#186818;width:75.6px;overflow:hidden;">Ja</span>
<div style="left:613px;top:358px;width:16px;height:125px;background:repeating-conic-gradient(#fff 0 25%,#c0c0c0 0 50%) 0 0/2px 2px;"></div>
<div style="left:613px;top:358px;width:16px;height:17px;background:#c0c0c0;box-shadow:inset -1px -1px #000,inset 1px 1px #fff,inset -2px -2px #808080,inset 2px 2px #dfdfdf;"></div>
<svg style="left:617px;top:364px" width="8" height="5" viewBox="0 0 8 5"><path d="M0 4H7L3.5 0.5Z" fill="#000"/></svg>
<div style="left:613px;top:375px;width:16px;height:17px;background:#c0c0c0;box-shadow:inset -1px -1px #000,inset 1px 1px #fff,inset -2px -2px #808080,inset 2px 2px #dfdfdf;"></div>
<div style="left:613px;top:465px;width:16px;height:17px;background:#c0c0c0;box-shadow:inset -1px -1px #000,inset 1px 1px #fff,inset -2px -2px #808080,inset 2px 2px #dfdfdf;"></div>
<svg style="left:617px;top:471px" width="8" height="5" viewBox="0 0 8 5"><path d="M0 0H7L3.5 3.5Z" fill="#000"/></svg>
<div style="left:55px;top:484px;width:581px;height:1px;background:#000;"></div>
<div style="left:55px;top:484px;width:44px;height:22px;background:#c0c0c0;box-shadow:inset -1px -1px #000,inset 1px 0 #000,inset -2px -2px #808080;"></div>
<span style="left:61px;top:488px;"><u>Z</u>ähler</span>
<div style="left:3px;top:484px;width:52px;height:23px;background:#c0c0c0;box-shadow:inset -1px -1px #000,inset 1px 0 #fff,inset -2px -2px #808080;"></div>
<span style="left:13px;top:484px;">K<u>a</u>näle</span>
<div style="left:641px;top:246px;width:147px;height:27px;background:#c0c0c0;box-shadow:inset -1px -1px #000,inset 1px 1px #fff,inset -2px -2px #808080,inset 2px 2px #dfdfdf;"></div>
<span style="left:641px;width:147px;text-align:center;top:254px;transform-origin:center top;"><u>I</u>nfo:Treiber</span>
<div style="left:641px;top:279px;width:147px;height:27px;background:#c0c0c0;box-shadow:inset -1px -1px #000,inset 1px 1px #fff,inset -2px -2px #808080,inset 2px 2px #dfdfdf;"></div>
<span style="left:641px;width:147px;text-align:center;top:287px;transform-origin:center top;"><u>E</u>instellung Zählerwerte</span>
<div style="left:641px;top:311px;width:147px;height:27px;background:#c0c0c0;box-shadow:inset -1px -1px #000,inset 1px 1px #fff,inset -2px -2px #808080,inset 2px 2px #dfdfdf;"></div>
<span style="left:641px;width:147px;text-align:center;top:319px;transform-origin:center top;">Einstellung <u>K</u>anal</span>
<div style="left:641px;top:344px;width:147px;height:27px;background:#c0c0c0;box-shadow:inset -1px -1px #000,inset 1px 1px #fff,inset -2px -2px #808080,inset 2px 2px #dfdfdf;"></div>
<span style="left:641px;width:147px;text-align:center;top:352px;transform-origin:center top;">Überp<u>r</u>üfung Kanal</span>
<div style="left:641px;top:381px;width:147px;height:27px;background:#c0c0c0;box-shadow:inset -1px -1px #000,inset 1px 1px #fff,inset -2px -2px #808080,inset 2px 2px #dfdfdf;"></div>
<span style="left:642px;width:147px;text-align:center;top:390px;transform-origin:center top;color:#fff;">Ein<u>s</u>tellung Zähler</span>
<span style="left:641px;width:147px;text-align:center;top:389px;transform-origin:center top;color:#808080;">Ein<u>s</u>tellung Zähler</span>
<div style="left:641px;top:414px;width:147px;height:27px;background:#c0c0c0;box-shadow:inset -1px -1px #000,inset 1px 1px #fff,inset -2px -2px #808080,inset 2px 2px #dfdfdf;"></div>
<span style="left:642px;width:147px;text-align:center;top:423px;transform-origin:center top;color:#fff;">S<u>t</u>art der Auslesung</span>
<span style="left:641px;width:147px;text-align:center;top:422px;transform-origin:center top;color:#808080;">S<u>t</u>art der Auslesung</span>
<div style="left:641px;top:446px;width:147px;height:27px;background:#c0c0c0;box-shadow:inset -1px -1px #000,inset 1px 1px #fff,inset -2px -2px #808080,inset 2px 2px #dfdfdf;"></div>
<span style="left:642px;width:147px;text-align:center;top:455px;transform-origin:center top;color:#fff;">Einstellung erw. Funktionen</span>
<span style="left:641px;width:147px;text-align:center;top:454px;transform-origin:center top;color:#808080;">Einstellung erw. Funktionen</span>
<div style="left:641px;top:479px;width:147px;height:27px;background:#c0c0c0;box-shadow:inset -1px -1px #000,inset 1px 1px #fff,inset -2px -2px #808080,inset 2px 2px #dfdfdf;"></div>
<span style="left:641px;width:147px;text-align:center;top:487px;transform-origin:center top;"><u>E</u>rweiterte Funktionen</span>
<div style="left:0;top:512px;width:799px;height:189px;background:#c0c0c0;box-shadow:inset -1px -1px #000,inset 1px 1px #c0c0c0,inset -2px -2px #808080,inset 2px 2px #fff;"></div>
<div style="left:3px;top:517px;width:793px;height:19px;background:linear-gradient(to right,#000080,#1084d0);"></div>
<svg style="left:5px;top:518px" width="16" height="16" viewBox="0 0 16 16"><rect x="1" y="2" width="2" height="2" fill="#8080ff"/><rect x="7" y="7" width="2" height="2" fill="#6060ff"/><rect x="13" y="12" width="2" height="2" fill="#6060f0"/><rect x="4" y="5" width="1" height="1" fill="#4040e0"/><rect x="10" y="9" width="1" height="1" fill="#4040e0"/></svg>
<span style="left:25px;top:519.5px;font-weight:bold;font-size:13.5px;letter-spacing:0.55px;color:#fff;transform:scaleX(0.88);">Zähler</span>
<div style="left:739px;top:519px;width:16px;height:14px;background:#c0c0c0;box-shadow:inset -1px -1px #000,inset 1px 1px #fff,inset -2px -2px #808080,inset 2px 2px #dfdfdf;"></div>
<div style="left:743px;top:527px;width:6px;height:2px;background:#000;"></div>
<div style="left:755px;top:519px;width:16px;height:14px;background:#c0c0c0;box-shadow:inset -1px -1px #000,inset 1px 1px #fff,inset -2px -2px #808080,inset 2px 2px #dfdfdf;"></div>
<div style="left:758px;top:521px;width:9px;height:9px;box-shadow:inset 0 2px #000,inset 1px 0 #000,inset -1px 0 #000,inset 0 -1px #000;"></div>
<div style="left:775px;top:519px;width:16px;height:14px;background:#c0c0c0;box-shadow:inset -1px -1px #000,inset 1px 1px #fff,inset -2px -2px #808080,inset 2px 2px #dfdfdf;"></div>
<svg style="left:779px;top:522px" width="8" height="7"><path d="M0.5 0.5L7.5 6.5M7.5 0.5L0.5 6.5" stroke="#000" stroke-width="1.6"/></svg>
<div style="left:3px;top:537px;width:793px;height:1px;background:#808080;"></div>
<div style="left:3px;top:538px;width:793px;height:1px;background:#fff;"></div>
<svg style="left:10px;top:547px" width="12" height="10" viewBox="0 0 12 10"><g transform="translate(1,1)"><rect x="0" y="0" width="2" height="8" fill="#fff"/><path d="M10 0V8L2.5 4Z" fill="#fff"/></g><rect x="0" y="0" width="2" height="8" fill="#808080"/><path d="M10 0V8L2.5 4Z" fill="#808080"/></svg>
<svg style="left:36px;top:547px" width="9" height="10" viewBox="0 0 9 10"><g transform="translate(1,1)"><path d="M7 0V8L0.5 4Z" fill="#fff"/></g><path d="M7 0V8L0.5 4Z" fill="#808080"/></svg>
<svg style="left:62px;top:547px" width="9" height="10" viewBox="0 0 9 10"><path d="M0 0V8L7 4Z" fill="#000"/></svg>
<svg style="left:84px;top:547px" width="12" height="10" viewBox="0 0 12 10"><path d="M0 0V8L8 4Z" fill="#000"/><rect x="8.5" y="0" width="2" height="8" fill="#000"/></svg>
<svg style="left:108px;top:546px" width="12" height="11" viewBox="0 0 12 11"><path d="M8.5 3A4 4 0 1 0 6 9.5" stroke="#000" stroke-width="2.4" fill="none"/><path d="M6 0.5L11 0.5L11 5.5Z" fill="#000"/></svg>
<div style="left:131px;top:541px;width:1px;height:20px;background:#808080;box-shadow:1px 0 #fff"></div>
<svg style="left:139px;top:545px" width="16" height="14" viewBox="0 0 16 14"><rect x="0.5" y="0.5" width="15" height="13" fill="#fff" stroke="#000080"/><rect x="0" y="0" width="16" height="3" fill="#000080"/><rect x="3" y="1" width="1" height="1" fill="#fff"/><rect x="7" y="1" width="1" height="1" fill="#fff"/><rect x="11" y="1" width="1" height="1" fill="#fff"/><rect x="2" y="4" width="3" height="1" fill="#606060"/><rect x="6" y="4" width="4" height="1" fill="#606060"/><rect x="11" y="4" width="3" height="1" fill="#606060"/><rect x="2" y="6" width="3" height="1" fill="#606060"/><rect x="6" y="6" width="4" height="1" fill="#606060"/><rect x="11" y="6" width="3" height="1" fill="#606060"/><rect x="2" y="8" width="3" height="1" fill="#606060"/><rect x="6" y="8" width="4" height="1" fill="#606060"/><rect x="11" y="8" width="3" height="1" fill="#606060"/><rect x="2" y="10" width="3" height="1" fill="#606060"/><rect x="6" y="10" width="4" height="1" fill="#606060"/><rect x="11" y="10" width="3" height="1" fill="#606060"/></svg>
<svg style="left:164px;top:543px" width="17" height="17" viewBox="0 0 17 17"><text x="0.5" y="8" font-family="Liberation Serif" font-weight="bold" font-size="10" fill="#000">A</text><text x="0.5" y="16" font-family="Liberation Serif" font-weight="bold" font-size="10" fill="#000">Z</text><rect x="12" y="0" width="1" height="13" fill="#000080"/><path d="M9.5 11H15.5L12.5 16Z" fill="#000080"/></svg>
<svg style="left:189px;top:544px" width="16" height="16" viewBox="0 0 16 16"><rect x="3" y="0" width="3" height="5" fill="#000"/><rect x="10" y="0" width="3" height="5" fill="#000"/><path d="M1.5 5H7V7H9V5H14.5L16 8V14.5H9.5V9H6.5V14.5H0V8Z" fill="#000"/><rect x="2" y="9" width="1" height="3" fill="#fff"/><rect x="10.5" y="8" width="1" height="3" fill="#fff"/><rect x="4" y="1" width="1" height="2" fill="#808080"/></svg>
<svg style="left:212px;top:543px" width="19" height="16" viewBox="0 0 19 16"><rect x="2" y="0" width="2" height="3" fill="#000"/><rect x="7" y="0" width="2" height="3" fill="#000"/><path d="M1 3H9.5L10.5 5V8H6V6H4.5V9H0V5Z" fill="#000"/><rect x="1.5" y="5" width="1" height="2" fill="#fff"/><rect x="7.5" y="5.5" width="10" height="9" fill="#fff" stroke="#000"/><rect x="8" y="6" width="9" height="2" fill="#000080"/><rect x="10" y="10" width="5" height="1" fill="#808080"/></svg>
<svg style="left:238px;top:544px" width="18" height="17" viewBox="0 0 18 17"><rect x="2" y="0" width="2" height="3" fill="#787878"/><rect x="7" y="0" width="2" height="3" fill="#787878"/><path d="M1 3H9.5L10.5 5V9H6V6H4.5V9H0V5Z" fill="#787878"/><rect x="1.5" y="5" width="1" height="2" fill="#e0e0e0"/><path d="M2 12.5H12" stroke="#909090" stroke-dasharray="1.5 1"/><path d="M12 9.5L16 12.5L12 15.5" stroke="#808080" stroke-width="1.2" fill="none"/><path d="M3 13.5H12" stroke="#fff" stroke-width="0.8" stroke-dasharray="1.5 1"/><path d="M13 15.5L16.5 13" stroke="#fff" stroke-width="1"/></svg>
<svg style="left:263px;top:544px" width="19" height="17" viewBox="0 0 19 17"><rect x="0.5" y="0.5" width="10" height="8" fill="#fff" stroke="#000"/><rect x="1" y="1" width="9" height="2" fill="#000080"/><rect x="2" y="4.5" width="7" height="1" fill="#d09090"/><path d="M4.5 7.5H11.5V3.5L18 9.5L11.5 15.5V11.5H4.5Z" fill="#20e0e0" stroke="#003030" stroke-width="1"/></svg>
<svg style="left:290px;top:542px" width="16" height="18" viewBox="0 0 16 18"><rect x="0.5" y="4.5" width="11" height="12" fill="#fff" stroke="#000"/><path d="M2 10L5.5 14L14 1" stroke="#0000c0" stroke-width="2.6" fill="none"/></svg>
<svg style="left:316px;top:545px" width="12" height="14" viewBox="0 0 12 14"><path d="M0.5 0.5H6.5L10.5 4.5V12.5H0.5Z" fill="#fff" stroke="#000"/><path d="M6.5 0.5V4.5H10.5" fill="none" stroke="#000"/></svg>
<svg style="left:338px;top:542px" width="18" height="17" viewBox="0 0 18 17"><circle cx="8.5" cy="8.3" r="6.3" stroke="#000090" stroke-width="3.6" fill="none"/><path d="M4 15H14" stroke="#000090" stroke-width="2"/><path d="M4.5 3.5H10L12 5.5V15H4.5Z" fill="#f8f8f0" stroke="#000" stroke-width="1"/><path d="M10 3.5V5.5H12" stroke="#000" fill="none"/></svg>
<div style="left:362px;top:541px;width:1px;height:20px;background:#808080;box-shadow:1px 0 #fff"></div>
<svg style="left:373px;top:545px" width="14" height="14" viewBox="0 0 14 14"><path d="M0.5 0.5H13.5L8.5 6V13.5H5.5V6Z" fill="#fff" stroke="#000"/><path d="M3 2H11" stroke="#808080"/></svg>
<svg style="left:396px;top:544px" width="16" height="16" viewBox="0 0 16 16"><rect x="0" y="0" width="5" height="3" fill="#e00000"/><rect x="0" y="4" width="5" height="3" fill="#00a000"/><rect x="0" y="8" width="5" height="3" fill="#000"/><path d="M7 5.5Q7 2.5 10 2.5Q13 2.5 13 5.5Q13 7.5 11 8.5Q10 9.2 10 11" stroke="#000" stroke-width="2.2" fill="none"/><rect x="8.8" y="12.5" width="2.5" height="2.5" fill="#000"/></svg>
<div style="left:421px;top:541px;width:1px;height:20px;background:#808080;box-shadow:1px 0 #fff"></div>
<svg style="left:428px;top:542px" width="19" height="18" viewBox="0 0 19 18"><circle cx="9" cy="2.5" r="2" fill="#000080"/><circle cx="15" cy="6" r="2" fill="#000080"/><circle cx="14" cy="12" r="2" fill="#000080"/><circle cx="4" cy="15" r="2" fill="#000080"/><circle cx="10" cy="15" r="1.5" fill="#000080"/><path d="M1 6H6V3.5L10.5 8L6 12.5V10H1Z" fill="#00c000" stroke="#004000" stroke-width="1"/></svg>
<svg style="left:455px;top:542px" width="16" height="18" viewBox="0 0 16 18"><ellipse cx="8" cy="2.5" rx="2.2" ry="2.3" fill="#000080"/><ellipse cx="3.5" cy="5.5" rx="2.2" ry="2.3" fill="#000080"/><ellipse cx="12.5" cy="5.5" rx="2.2" ry="2.3" fill="#000080"/><ellipse cx="3" cy="10.5" rx="2.2" ry="2.3" fill="#000080"/><ellipse cx="13" cy="10.5" rx="2.2" ry="2.3" fill="#000080"/><ellipse cx="3" cy="15" rx="2.2" ry="2.3" fill="#000080"/><ellipse cx="13" cy="15" rx="2.2" ry="2.3" fill="#000080"/><path d="M3.5 5.5L8 2.5L12.5 5.5M3 10.5V15M13 10.5V15M3.5 5.5L3 10.5M12.5 5.5L13 10.5" stroke="#000080" stroke-width="1" fill="none"/></svg>
<span style="left:774px;top:544px;"># 6</span>
<div style="left:3px;top:564px;width:793px;height:90px;box-shadow:inset -1px -1px #404040,inset 1px 1px #fff;"></div>
<div style="left:8px;top:571px;width:781px;height:79px;background:#fff;box-shadow:inset 1px 1px #000,inset -1px -1px #fff;"></div>
<div style="left:9px;top:572px;width:13px;height:19px;background:#c0c0c0;box-shadow:inset -1px -1px #000,inset 1px 1px #fff;"></div>
<svg style="left:12px;top:577px" width="7" height="10" viewBox="0 0 7 10"><rect x="0.5" y="0.5" width="6" height="9" fill="#e0e0e0" stroke="#000"/><rect x="2" y="2" width="3" height="1" fill="#000"/><rect x="2" y="4" width="3" height="1" fill="#000"/><rect x="2" y="6" width="3" height="1" fill="#000"/></svg>
<div style="left:22px;top:572px;width:109px;height:19px;background:#c0c0c0;box-shadow:inset -1px -1px #000,inset 1px 1px #fff;"></div>
<span style="left:26px;top:576px;font-size:12.5px;font-weight:bold;transform:none;width:113.3px;overflow:hidden;">Name1</span>
<svg style="left:116px;top:575px" width="9" height="12" viewBox="0 0 9 12"><path d="M4.5 0.7L8.3 5.5L4.5 10.3L0.7 5.5Z" fill="#f4f0b8" stroke="#505010" stroke-width="1.1"/><circle cx="4.5" cy="5.5" r="1.6" fill="#c0b040" stroke="#505010" stroke-width="1"/></svg>
<div style="left:131px;top:572px;width:109px;height:19px;background:#c0c0c0;box-shadow:inset -1px -1px #000,inset 1px 1px #fff;"></div>
<span style="left:135px;top:576px;width:113.3px;overflow:hidden;">Name2</span>
<svg style="left:225px;top:575px" width="9" height="12" viewBox="0 0 9 12"><path d="M4.5 0.7L8.3 5.5L4.5 10.3L0.7 5.5Z" fill="#f4f0b8" stroke="#505010" stroke-width="1.1"/><circle cx="4.5" cy="5.5" r="1.6" fill="#c0b040" stroke="#505010" stroke-width="1"/></svg>
<div style="left:240px;top:572px;width:109px;height:19px;background:#c0c0c0;box-shadow:inset -1px -1px #000,inset 1px 1px #fff;"></div>
<span style="left:244px;top:576px;width:113.3px;overflow:hidden;">Name3</span>
<svg style="left:334px;top:575px" width="9" height="12" viewBox="0 0 9 12"><path d="M4.5 0.7L8.3 5.5L4.5 10.3L0.7 5.5Z" fill="#f4f0b8" stroke="#505010" stroke-width="1.1"/><circle cx="4.5" cy="5.5" r="1.6" fill="#c0b040" stroke="#505010" stroke-width="1"/></svg>
<div style="left:349px;top:572px;width:109px;height:19px;background:#c0c0c0;box-shadow:inset -1px -1px #000,inset 1px 1px #fff;"></div>
<span style="left:353px;top:576px;width:113.3px;overflow:hidden;">Typ</span>
<div style="left:458px;top:572px;width:110px;height:19px;background:#c0c0c0;box-shadow:inset -1px -1px #000,inset 1px 1px #fff;"></div>
<span style="left:462px;top:576px;width:114.4px;overflow:hidden;">Adresse</span>
<svg style="left:553px;top:575px" width="9" height="12" viewBox="0 0 9 12"><path d="M4.5 0.7L8.3 5.5L4.5 10.3L0.7 5.5Z" fill="#f4f0b8" stroke="#505010" stroke-width="1.1"/><circle cx="4.5" cy="5.5" r="1.6" fill="#c0b040" stroke="#505010" stroke-width="1"/></svg>
<div style="left:568px;top:572px;width:109px;height:19px;background:#c0c0c0;box-shadow:inset -1px -1px #000,inset 1px 1px #fff;"></div>
<span style="left:572px;top:576px;width:113.3px;overflow:hidden;">Einstellung Zähle</span>
<svg style="left:662px;top:575px" width="9" height="12" viewBox="0 0 9 12"><path d="M4.5 0.7L8.3 5.5L4.5 10.3L0.7 5.5Z" fill="#f4f0b8" stroke="#505010" stroke-width="1.1"/><circle cx="4.5" cy="5.5" r="1.6" fill="#c0b040" stroke="#505010" stroke-width="1"/></svg>
<div style="left:677px;top:572px;width:70px;height:19px;background:#c0c0c0;box-shadow:inset -1px -1px #000,inset 1px 1px #fff;"></div>
<span style="left:681px;top:576px;width:70.0px;overflow:hidden;">Lesen</span>
<div style="left:747px;top:572px;width:44px;height:19px;background:#c0c0c0;box-shadow:inset -1px -1px #000,inset 1px 1px #fff;"></div>
<span style="left:751px;top:576px;width:41.1px;overflow:hidden;">Erw</span>
<div style="left:9px;top:591px;width:13px;height:19px;background:#c0c0c0;box-shadow:inset -1px -1px #000,inset 1px 1px #fff;"></div>
<svg style="left:12px;top:595px" width="7" height="11" viewBox="0 0 7 11"><path d="M0.5 0.5V10.5L6 5.5Z" fill="#000"/></svg>
<div style="left:22px;top:591px;width:109px;height:19px;box-shadow:inset -1px -1px #c0c0c0;"></div>
<span style="left:24px;top:595px;color:#186818;width:117.8px;overflow:hidden;">Zähler 1</span>
<div style="left:131px;top:591px;width:109px;height:19px;box-shadow:inset -1px -1px #c0c0c0;"></div>
<div style="left:240px;top:591px;width:109px;height:19px;box-shadow:inset -1px -1px #c0c0c0;"></div>
<div style="left:349px;top:591px;width:109px;height:19px;box-shadow:inset -1px -1px #c0c0c0;"></div>
<span style="left:351px;top:595px;color:#186818;width:117.8px;overflow:hidden;">Cosmos Encoder</span>
<div style="left:458px;top:591px;width:110px;height:19px;box-shadow:inset -1px -1px #c0c0c0;"></div>
<span style="left:460px;top:595px;color:#186818;width:118.9px;overflow:hidden;">1</span>
<div style="left:568px;top:591px;width:109px;height:19px;box-shadow:inset -1px -1px #c0c0c0;"></div>
<span style="left:570px;top:595px;color:#186818;width:117.8px;overflow:hidden;">Cosmos Encoder, 1H</span>
<div style="left:677px;top:591px;width:70px;height:19px;box-shadow:inset -1px -1px #c0c0c0;"></div>
<span style="left:679px;top:595px;color:#186818;width:74.4px;overflow:hidden;">Ja</span>
<div style="left:747px;top:591px;width:44px;height:19px;box-shadow:inset -1px -1px #c0c0c0;"></div>
<span style="left:749px;top:595px;color:#186818;width:45.6px;overflow:hidden;">Neir</span>
<div style="left:9px;top:610px;width:13px;height:20px;background:#c0c0c0;box-shadow:inset -1px -1px #000,inset 1px 1px #fff;"></div>
<div style="left:22px;top:610px;width:109px;height:20px;box-shadow:inset -1px -1px #c0c0c0;"></div>
<span style="left:24px;top:614px;color:#186818;width:117.8px;overflow:hidden;">Zähler 1</span>
<div style="left:131px;top:610px;width:109px;height:20px;box-shadow:inset -1px -1px #c0c0c0;"></div>
<div style="left:240px;top:610px;width:109px;height:20px;box-shadow:inset -1px -1px #c0c0c0;"></div>
<div style="left:349px;top:610px;width:109px;height:20px;box-shadow:inset -1px -1px #c0c0c0;"></div>
<span style="left:351px;top:614px;color:#186818;width:117.8px;overflow:hidden;">Cosmos Encoder</span>
<div style="left:458px;top:610px;width:110px;height:20px;box-shadow:inset -1px -1px #c0c0c0;"></div>
<span style="left:460px;top:614px;color:#186818;width:118.9px;overflow:hidden;">1</span>
<div style="left:568px;top:610px;width:109px;height:20px;box-shadow:inset -1px -1px #c0c0c0;"></div>
<span style="left:570px;top:614px;color:#186818;width:117.8px;overflow:hidden;">Cosmos Encoder, 1H</span>
<div style="left:677px;top:610px;width:70px;height:20px;box-shadow:inset -1px -1px #c0c0c0;"></div>
<span style="left:679px;top:614px;color:#186818;width:74.4px;overflow:hidden;">Ja</span>
<div style="left:747px;top:610px;width:44px;height:20px;box-shadow:inset -1px -1px #c0c0c0;"></div>
<span style="left:749px;top:614px;color:#186818;width:45.6px;overflow:hidden;">Neir</span>
<div style="left:771px;top:573px;width:17px;height:59px;background:repeating-conic-gradient(#fff 0 25%,#c0c0c0 0 50%) 0 0/2px 2px;"></div>
<div style="left:771px;top:573px;width:17px;height:16px;background:#c0c0c0;box-shadow:inset -1px -1px #000,inset 1px 1px #fff,inset -2px -2px #808080,inset 2px 2px #dfdfdf;"></div>
<svg style="left:775px;top:578px" width="8" height="5" viewBox="0 0 8 5"><path d="M0 4H7L3.5 0.5Z" fill="#000"/></svg>
<div style="left:771px;top:589px;width:17px;height:17px;background:#c0c0c0;box-shadow:inset -1px -1px #000,inset 1px 1px #fff,inset -2px -2px #808080,inset 2px 2px #dfdfdf;"></div>
<div style="left:771px;top:615px;width:17px;height:17px;background:#c0c0c0;box-shadow:inset -1px -1px #000,inset 1px 1px #fff,inset -2px -2px #808080,inset 2px 2px #dfdfdf;"></div>
<svg style="left:775px;top:621px" width="8" height="5" viewBox="0 0 8 5"><path d="M0 0H7L3.5 3.5Z" fill="#000"/></svg>
<div style="left:9px;top:632px;width:762px;height:17px;background:repeating-conic-gradient(#fff 0 25%,#c0c0c0 0 50%) 0 0/2px 2px;"></div>
<div style="left:9px;top:632px;width:16px;height:17px;background:#c0c0c0;box-shadow:inset -1px -1px #000,inset 1px 1px #fff,inset -2px -2px #808080,inset 2px 2px #dfdfdf;"></div>
<svg style="left:14px;top:636px" width="5" height="8" viewBox="0 0 5 8"><path d="M4 0V7L0.5 3.5Z" fill="#000"/></svg>
<div style="left:25px;top:632px;width:19px;height:17px;background:#c0c0c0;box-shadow:inset -1px -1px #000,inset 1px 1px #fff,inset -2px -2px #808080,inset 2px 2px #dfdfdf;"></div>
<div style="left:755px;top:632px;width:16px;height:17px;background:#c0c0c0;box-shadow:inset -1px -1px #000,inset 1px 1px #fff,inset -2px -2px #808080,inset 2px 2px #dfdfdf;"></div>
<svg style="left:760px;top:636px" width="5" height="8" viewBox="0 0 5 8"><path d="M0 0V7L3.5 3.5Z" fill="#000"/></svg>
<div style="left:771px;top:632px;width:17px;height:17px;background:#c0c0c0;"></div>
</body></html>
